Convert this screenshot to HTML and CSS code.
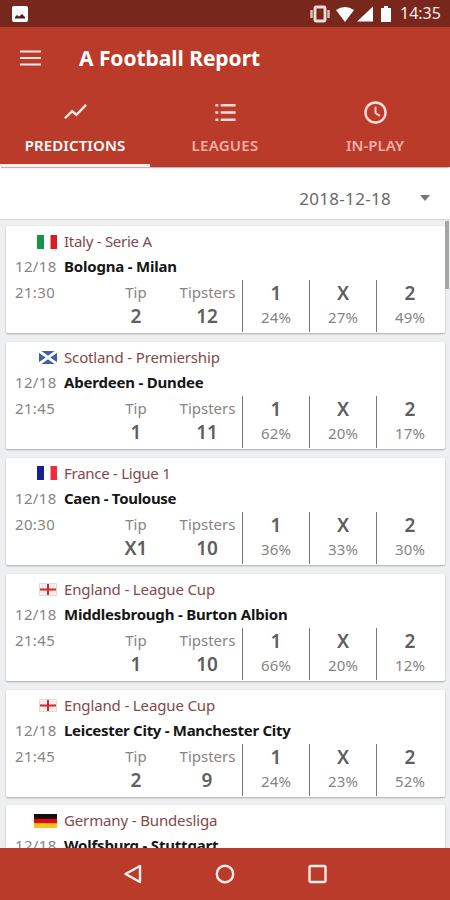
FILE: index.html
```
<!DOCTYPE html>
<html lang="en">
<head>
<meta charset="utf-8">
<title>A Football Report</title>
<link rel="stylesheet" href="styles.css">
</head>
<body>
<header class="status">
  <svg class="status-photo" viewBox="0 0 16 16"><rect width="16" height="16" rx="2" fill="#fff"/><path d="M3 12.500V11l2-2 2 1.500L10 8l3 3v1.500z" fill="#54201c"/></svg>
  <svg class="status-icons" viewBox="0 0 84 18"><path d="M2.500 5v8M19.500 5v8" stroke="#dcbcb9" stroke-width="2.500"/><rect x="6" y="2" width="10" height="14" rx="1" fill="none" stroke="#ecdcda" stroke-width="2.800"/><path d="M27 5q9-6 18 0l-9 12z" fill="#fff"/><path d="M64 1.500v15H48z" fill="#fff"/><path d="M72 3h3V1h4v2h3v14H72z" fill="#fff"/></svg>
  <span class="clock">14:35</span>
</header>
<div class="appbar">
  <svg class="menu" viewBox="0 0 21 16"><path d="M0 1.500h21M0 8h21M0 14.500h21" stroke="#ffe5e1" stroke-width="2.200"/></svg>
  <h1>A Football Report</h1>
</div>
<nav class="tabs">
  <div class="tab active"><svg viewBox="0 0 24 24"><path d="M1 18l7.500-7.500 4.500 4 10-10.500" fill="none" stroke="#ffe9e5" stroke-width="2.500"/></svg><span class="t1">PREDICTIONS</span></div>
  <div class="tab"><svg viewBox="0 0 24 24"><path d="M1.500 4.500h3M1.500 12h3M1.500 19.500h3M7 4.500h15.500M7 12h15.500M7 19.500h15.500" stroke="#ffdcd6" stroke-width="2.500"/></svg><span class="t2">LEAGUES</span></div>
  <div class="tab"><svg viewBox="0 0 24 24"><circle cx="12" cy="12" r="10.500" fill="none" stroke="#ffe0da" stroke-width="2.500"/><path d="M12 6v6.500l4.500 3" fill="none" stroke="#ffd6d0" stroke-width="2"/></svg><span class="t3">IN-PLAY</span></div>
</nav>
<div class="datebar"><span>2018-12-18</span><i class="caret"></i></div>
<main class="list">
  <i class="scroll"></i>
  <article class="card">
    <div class="row league"><svg class="flag wide" viewBox="0 0 20 14"><path fill="#fff" d="M0 0h20v14H0z"/><path fill="#169447" d="M0 0h7v14H0z"/><path fill="#d41c27" d="M13.500 0H20v14h-6.500z"/></svg><span class="tight">Italy - Serie A</span></div>
    <div class="row teams"><time>12/18</time><b>Bologna - Milan</b></div>
    <div class="stats"><time>21:30</time><div class="tip">Tip<b>2</b></div><div class="tipsters">Tipsters<b>12</b></div><div class="odd"><b>1</b>24%</div><div class="odd"><b>X</b>27%</div><div class="odd"><b>2</b>49%</div></div>
  </article>
  <article class="card">
    <div class="row league"><svg class="flag" viewBox="0 0 18 13"><path fill="#3f5faa" d="M0 0h18v13H0z"/><path d="M0 0l18 13M18 0L0 13" stroke="#fff" stroke-width="2.800"/></svg><span>Scotland - Premiership</span></div>
    <div class="row teams"><time>12/18</time><b>Aberdeen - Dundee</b></div>
    <div class="stats"><time>21:45</time><div class="tip">Tip<b>1</b></div><div class="tipsters">Tipsters<b>11</b></div><div class="odd"><b>1</b>62%</div><div class="odd"><b>X</b>20%</div><div class="odd"><b>2</b>17%</div></div>
  </article>
  <article class="card">
    <div class="row league"><svg class="flag wide" viewBox="0 0 20 14"><path fill="#fff" d="M0 0h20v14H0z"/><path fill="#14228f" d="M0 0h7v14H0z"/><path fill="#ee2c3c" d="M13.500 0H20v14h-6.500z"/></svg><span class="tight">France - Ligue 1</span></div>
    <div class="row teams"><time>12/18</time><b class="snug">Caen - Toulouse</b></div>
    <div class="stats"><time>20:30</time><div class="tip">Tip<b>X1</b></div><div class="tipsters">Tipsters<b>10</b></div><div class="odd"><b>1</b>36%</div><div class="odd"><b>X</b>33%</div><div class="odd"><b>2</b>30%</div></div>
  </article>
  <article class="card">
    <div class="row league"><svg class="flag" viewBox="0 0 18 13"><path fill="#f4eeee" stroke="#ddd" d="M.5.5h17v12H.5z"/><path d="M9 1v11M1 6.500h16" stroke="#d42626" stroke-width="2"/></svg><span>England - League Cup</span></div>
    <div class="row teams"><time>12/18</time><b>Middlesbrough - Burton Albion</b></div>
    <div class="stats"><time>21:45</time><div class="tip">Tip<b>1</b></div><div class="tipsters">Tipsters<b>10</b></div><div class="odd"><b>1</b>66%</div><div class="odd"><b>X</b>20%</div><div class="odd"><b>2</b>12%</div></div>
  </article>
  <article class="card">
    <div class="row league"><svg class="flag" viewBox="0 0 18 13"><path fill="#f4eeee" stroke="#ddd" d="M.5.5h17v12H.5z"/><path d="M9 1v11M1 6.500h16" stroke="#d42626" stroke-width="2"/></svg><span>England - League Cup</span></div>
    <div class="row teams"><time>12/18</time><b class="snug">Leicester City - Manchester City</b></div>
    <div class="stats"><time>21:45</time><div class="tip">Tip<b>2</b></div><div class="tipsters">Tipsters<b>9</b></div><div class="odd"><b>1</b>24%</div><div class="odd"><b>X</b>23%</div><div class="odd"><b>2</b>52%</div></div>
  </article>
  <article class="card">
    <div class="row league"><svg class="flag de" viewBox="0 0 23 14"><path fill="#111" d="M0 0h23v5H0z"/><path fill="#d90d0d" d="M0 4.700h23v5H0z"/><path fill="#f9c31c" d="M0 9.300h23V14H0z"/></svg><span>Germany - Bundesliga</span></div>
    <div class="row teams"><time>12/18</time><b>Wolfsburg - Stuttgart</b></div>
  </article>
</main>
<footer class="nav">
  <svg viewBox="0 0 24 24"><path d="M4.500 12 19 4v16z" fill="none" stroke="#fff0ed" stroke-width="2.400" stroke-linejoin="round"/></svg>
  <svg viewBox="0 0 24 24"><circle cx="12" cy="12" r="8.200" fill="none" stroke="#fff0ed" stroke-width="2.400"/></svg>
  <svg viewBox="0 0 24 24"><rect x="4.500" y="4" width="16" height="16" rx="1.500" fill="none" stroke="#fff0ed" stroke-width="2.400"/></svg>
</footer>
</body>
</html>
```
FILE: styles.css
```
* { box-sizing: border-box; }
body {
  margin: 0;
  width: 450px;
  height: 900px;
  overflow: hidden;
  display: flex;
  flex-direction: column;
  font-family: "Noto Sans", "Open Sans", sans-serif;
  font-size: 15px;
  color: #858585;
  background: #fff;
}
svg { display: block; flex: none; }
.status {
  height: 27px;
  flex: none;
  display: flex;
  align-items: center;
  background: #78271d;
  padding: 0 9px 0 12px;
}
.status-photo { width: 16px; height: 16px; }
.status-icons { width: 84px; height: 18px; margin-left: auto; margin-right: 7px; }
.clock { width: 41px; font-size: 16px; line-height: 27px; color: #fbe9e7; white-space: nowrap; }
.appbar {
  height: 62px;
  flex: none;
  display: flex;
  align-items: center;
  background: #bb3b2b;
  padding: 0 20px;
}
.menu { width: 21px; height: 16px; margin-top: -1px; }
h1 { margin: 0 0 0 38px; font-size: 21px; line-height: 30px; font-weight: 700; letter-spacing: -.05px; color: #fff; white-space: nowrap; }
.tabs { height: 78px; flex: none; display: grid; grid-template-columns: repeat(3, 1fr); background: #bb3b2b; box-shadow: 0 2px 1px -1px #bbb; z-index: 1; }
.tab {
  display: flex;
  flex-direction: column;
  align-items: center;
  padding-top: 12px;
  font-size: 15px;
  line-height: 20px;
  font-weight: 600;
  color: #f0aea5;
  border-bottom: 3px solid #bb3b2b;
}
.tab svg { width: 23px; height: 23px; margin-bottom: 11px; }
.tab.active { color: #fff; border-color: #fdecea; }
.t1 { letter-spacing: .1px; }
.t2 { letter-spacing: .25px; }
.datebar {
  height: 53px;
  flex: none;
  display: flex;
  align-items: center;
  justify-content: flex-end;
  padding: 10px 20px 0 0;
  border-bottom: 1px solid #d5d7d8;
  font-size: 17px;
  letter-spacing: .3px;
  color: #686868;
}
.caret { margin-left: 29px; border: 5.500px solid transparent; border-top: 6px solid #757575; border-bottom: 0; }
.list {
  flex: 1;
  min-height: 0;
  overflow: hidden;
  position: relative;
  background: #edeff0;
  padding: 6px 5px 0 6px;
}
.scroll { position: absolute; right: 1px; top: 1px; width: 4px; height: 68px; background: #a5a5a5; }
.card {
  height: 107px;
  margin-bottom: 8.900px;
  padding-top: 3px;
  background: #fff;
  border-radius: 2px;
  box-shadow: 0 1px 2px #aaa;
}
.row { display: flex; align-items: center; height: 25px; line-height: 25px; white-space: nowrap; }
.league { color: #84484a; letter-spacing: -.14px; }
.league .tight { letter-spacing: -.27px; }
.league .flag { width: 18px; height: 13px; margin-left: 33px; margin-right: 7px; }
.league .wide { width: 20px; height: 14px; margin-left: 31px; }
.league .de { width: 23px; height: 14px; margin-left: 28px; }
time { width: 49px; padding-left: 9px; flex: none; color: #858585; letter-spacing: .35px; }
.teams b { margin-left: 9px; color: #161616; font-weight: 700; font-size: 15px; letter-spacing: -.2px; }
.teams .snug { letter-spacing: -.3px; }
.stats { display: grid; grid-template-columns: 103px 54px 79px repeat(3, 67px); line-height: 25px; padding-top: 1px; }
.stats > div { text-align: center; white-space: nowrap; }
.tipsters { padding-left: 10px; }
.stats b { display: block; font-size: 19px; line-height: 23px; font-weight: 600; color: #5f5f5f; }
.tipsters b { margin-left: -1px; }
.stats .odd { height: 52px; border-left: 1.500px solid #777; font-size: 15px; line-height: 22px; letter-spacing: .1px; }
.odd b { line-height: 26px; }
.nav { height: 52px; flex: none; display: flex; align-items: center; justify-content: center; gap: 68px; background: #bb3b2b; }
.nav svg { width: 24px; height: 24px; }
```
